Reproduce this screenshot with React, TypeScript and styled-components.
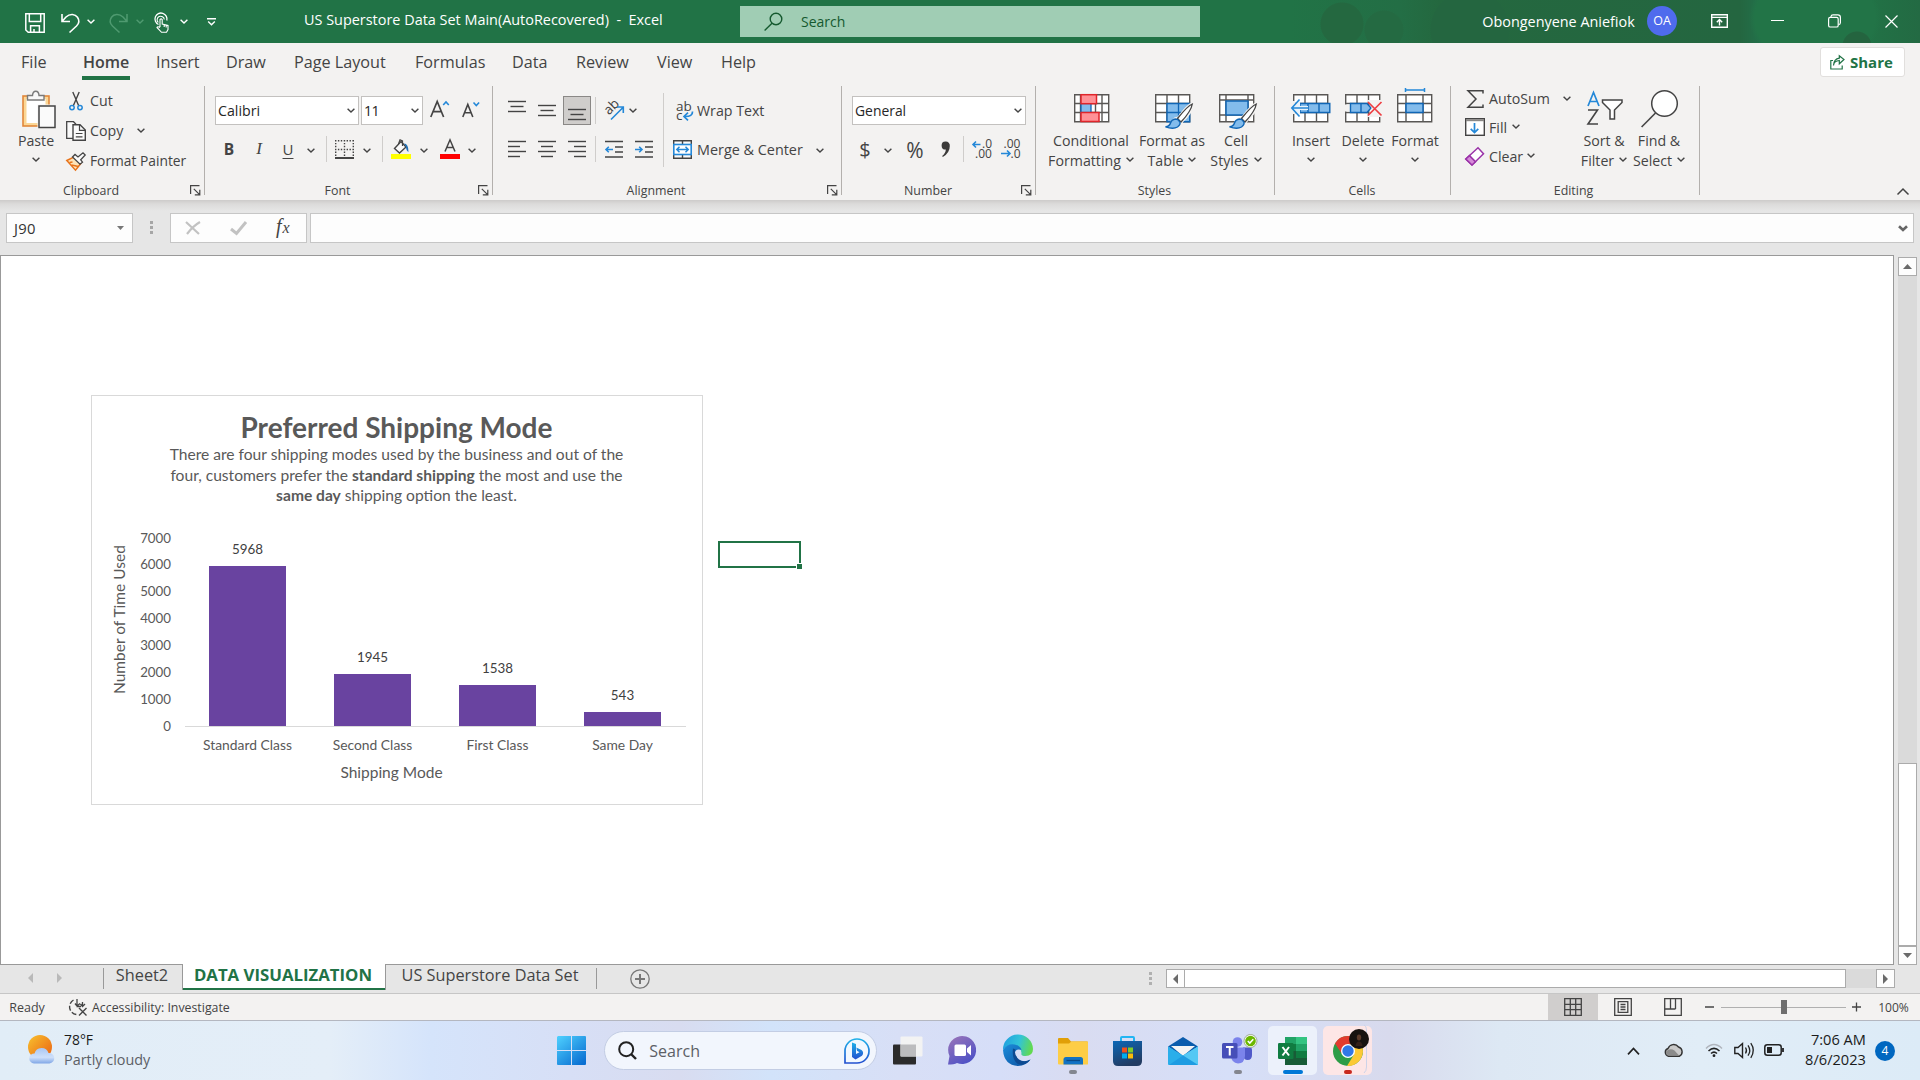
import React from "react";
import styled, { createGlobalStyle } from "styled-components";

const UI = `"Open Sans", "Noto Sans", sans-serif`;
const INK = "#444444";
const BLUE = "#2488d8";

const Global = createGlobalStyle`
  *, *::before, *::after { box-sizing: border-box; }
  html, body { margin: 0; padding: 0; overflow: hidden; background: #e6e6e6; }
  body { font-family: ${UI}; color: ${INK}; }
  svg { display: block; flex: none; overflow: visible; }
`;

const Screen = styled.div`
  width: 1920px;
  height: 1080px;
  display: flex;
  flex-direction: column;
  overflow: hidden;
`;

/* ---------- shared pieces ---------- */

const Line = styled.div<{ $h?: number; $pl?: number }>`
  display: flex;
  align-items: center;
  height: ${(p) => (p.$h ? `${p.$h}px` : "100%")};
  padding-left: ${(p) => p.$pl ?? 0}px;
`;

const Slot = styled.div<{ $w?: number; $l?: number; $mt?: number }>`
  flex: none;
  display: flex;
  align-items: center;
  justify-content: center;
  width: ${(p) => (p.$w ? `${p.$w}px` : "auto")};
  margin-left: ${(p) => p.$l ?? 0}px;
  margin-top: ${(p) => p.$mt ?? 0}px;
`;

const Text = styled.span<{ $s?: number; $w?: number; $c?: string; $l?: number; $ls?: number }>`
  font-size: ${(p) => p.$s ?? 14.2}px;
  font-weight: ${(p) => p.$w ?? 400};
  color: ${(p) => p.$c ?? "inherit"};
  margin-left: ${(p) => p.$l ?? 0}px;
  letter-spacing: ${(p) => p.$ls ?? 0}px;
  line-height: 20px;
  white-space: pre;
`;

function Ico({ w, h, children }: { w: number; h: number; children: React.ReactNode }) {
  return (
    <svg width={w} height={h} viewBox={`0 0 ${w} ${h}`} fill="none">
      {children}
    </svg>
  );
}

const Chevron = ({ c = INK, w = 8 }: { c?: string; w?: number }) => (
  <svg width={w} height={w * 0.625} viewBox="0 0 8 5" fill="none" stroke={c} strokeWidth={1.4}>
    <path d="M.6 .7 4 4.1 7.4 .7" />
  </svg>
);

/* ---------- title bar ---------- */

const TitleBar = styled.header`
  flex: none;
  height: 43px;
  display: flex;
  align-items: center;
  color: #fff;
  background:
    radial-gradient(circle at 1857px 46px, #24643f 0 14px, transparent 15px),
    radial-gradient(ellipse 66px 50px at 1815px 18px, #227447 0 60px, transparent 66px),
    radial-gradient(circle at 1342px 24px, #246840 0 21px, transparent 22px),
    radial-gradient(circle at 1384px 30px, #246a42 0 19px, transparent 20px),
    radial-gradient(circle at 1470px 30px, #246640 0 39px, transparent 40px),
    linear-gradient(90deg, #217346 1290px, #236e45 1400px, #24683f 1440px, #246640 1740px, #22704a 1760px, #217346 1860px, #236a43 1920px);
`;

const SearchBox = styled.div`
  flex: none;
  width: 460px;
  height: 31px;
  margin-left: 77px;
  display: flex;
  align-items: center;
  padding-left: 24px;
  background: #a0cdb4;
`;

const Avatar = styled.div`
  flex: none;
  width: 30px;
  height: 30px;
  margin-left: 12px;
  margin-top: -1px;
  border-radius: 50%;
  background: #4f6bed;
  display: flex;
  align-items: center;
  justify-content: center;
`;

const TitleText = styled.div`
  flex: none;
  width: 359px;
  margin: -5px 0 0 88px;
`;

function Title() {
  return (
    <TitleBar>
      <Slot $l={25} $mt={3}>
        <Ico w={20} h={20}>
          <g stroke="#fff" strokeWidth={1.5}>
            <path d="M.8 .8H19.2V19.2H3.2L.8 17z" />
            <path d="M4.3 1V8.6H15.7V1M5.6 19V12.8H14.4V19M9 19V16" />
          </g>
        </Ico>
      </Slot>
      <Slot $l={16} $mt={2}>
        <Ico w={19} h={20}>
          <path d="M1 1V8.5H9M1.4 8 5 4C9 .2 14.200 .9 16.500 4.200 18.500 7.200 18 10.500 15.500 13L8.500 19.500" stroke="#fff" strokeWidth={1.6} />
        </Ico>
      </Slot>
      <Slot $l={7}><Chevron c="#fff" /></Slot>
      <Slot $l={14} $mt={2}>
        <Ico w={19} h={20}>
          <path d="M18 1V8.500H10M17.600 8 14 4C10 .2 4.800 .9 2.500 4.200 .5 7.200 1 10.500 3.500 13L10.500 19.500" stroke="#4f9a70" strokeWidth={1.5} />
        </Ico>
      </Slot>
      <Slot $l={8}><Chevron c="#4f9a70" /></Slot>
      <Slot $l={10} $mt={3}>
        <Ico w={16} h={20}>
          <path d="M4.500 11.500A6 6 0 1 1 12.800 7.500" stroke="#fff" strokeWidth={1.300} />
          <path d="M4.300 9.500A3.600 3.600 0 1 1 10.300 6.500" stroke="#fff" strokeWidth={1.100} />
          <path d="M6 14V6.500Q7.200 5.300 8.200 6.500V11L14 12.500V16.500L12.500 19.300H7.500L3 14.500Q3.500 13 6 14.500M10.200 11.500V14M12.200 12V14.500" stroke="#fff" strokeWidth={1.100} />
        </Ico>
      </Slot>
      <Slot $l={10}><Chevron c="#fff" /></Slot>
      <Slot $l={19} $mt={1}>
        <Ico w={9} h={8}>
          <path d="M0 .8H9M1.200 3.500 4.500 6.800 7.800 3.500" stroke="#fff" strokeWidth={1.400} />
        </Ico>
      </Slot>
      <TitleText>
        <Text $s={14.43}>{"US Superstore Data Set Main(AutoRecovered)\u00a0 -\u00a0 Excel"}</Text>
      </TitleText>
      <SearchBox>
        <Ico w={19} h={19}>
          <g stroke="#15592f" strokeWidth={1.400}>
            <circle cx={12} cy={7} r={5.800} />
            <path d="M8 11.200 .6 18.500" />
          </g>
        </Ico>
        <Text $s={14} $c="#15592f" $l={18}>Search</Text>
      </SearchBox>
      <Slot $l={282} $w={153}><Text $s={14.4}>Obongenyene Aniefiok</Text></Slot>
      <Avatar><Text $s={12.500}>OA</Text></Avatar>
      <Slot $l={34} $mt={-1}>
        <Ico w={17} h={14}>
          <g stroke="#fff" strokeWidth={1.400}>
            <path d="M.7 .7H16.300V13.300H.7zM.7 3.400H16.300M8.500 11.500V5.500M5.800 8.200 8.500 5.500 11.200 8.200" />
          </g>
        </Ico>
      </Slot>
      <Slot $l={43} $mt={-1}><Ico w={13} h={2}><path d="M0 .5H13" stroke="#fff" /></Ico></Slot>
      <Slot $l={44} $mt={-1}>
        <Ico w={13} h={14}>
          <g stroke="#fff" strokeWidth={1.200}>
            <rect x={.6} y={3.400} width={9.600} height={9.600} rx={1.600} />
            <path d="M3 3.200V2.500Q3.200 .9 5 .9H9.800Q12.400 .9 12.400 3.500V8.800Q12.300 10.500 10.500 10.700" />
          </g>
        </Ico>
      </Slot>
      <Slot $l={44} $mt={-1}>
        <Ico w={13} h={13}><path d="M.5 .5 12.500 12.500M12.500 .5 .5 12.500" stroke="#fff" strokeWidth={1.200} /></Ico>
      </Slot>
    </TitleBar>
  );
}

/* ---------- ribbon tabs ---------- */

const TabBar = styled.nav`
  flex: none;
  height: 43px;
  display: flex;
  align-items: flex-start;
  padding-left: 21px;
  background: #f3f2f1;
`;

const TabItem = styled.div<{ $w: number }>`
  flex: none;
  width: ${(p) => p.$w}px;
  height: 36px;
  padding-top: 8px;
`;

const TabLabel = styled.div<{ $active?: boolean }>`
  display: inline-flex;
  height: 28px;
  padding: 0 1px;
  margin-left: ${(p) => (p.$active ? 0 : -1)}px;
  font-size: ${(p) => (p.$active ? 16 : 16.2)}px;
  line-height: 21px;
  white-space: nowrap;
  font-weight: ${(p) => (p.$active ? 600 : 400)};
  border-bottom: ${(p) => (p.$active ? "4px solid #217346" : "0")};
`;

const ShareButton = styled.div`
  width: 85px;
  height: 30px;
  margin: 4px 15px 0 auto;
  display: flex;
  align-items: center;
  padding-left: 9px;
  color: #217346;
  background: #fff;
  border: 1px solid #e1dfdd;
  border-radius: 3px;
`;

const TABS: [string, number][] = [
  ["File", 61], ["Home", 74], ["Insert", 70], ["Draw", 68], ["Page Layout", 121],
  ["Formulas", 97], ["Data", 64], ["Review", 81], ["View", 64], ["Help", 50],
];

function Tabs() {
  return (
    <TabBar>
      {TABS.map(([name, w]) => (
        <TabItem key={name} $w={w}>
          <TabLabel $active={name === "Home"}>{name}</TabLabel>
        </TabItem>
      ))}
      <ShareButton>
        <Ico w={15} h={15}>
          <g stroke="#217346" strokeWidth={1.200}>
            <path d="M3 5.500H.8V14H12.200V10.500" />
            <path d="M3.500 10.500Q4 5.800 9.300 5.500V8.800L14 4.500 9.300 .8V3.200Q3.800 4 3.500 10.500z" />
          </g>
        </Ico>
        <Text $s={15} $w={700} $l={5}>Share</Text>
      </ShareButton>
    </TabBar>
  );
}

/* ---------- ribbon ---------- */

const RibbonBar = styled.div`
  flex: none;
  height: 114px;
  display: flex;
  align-items: flex-start;
  background: #f3f2f1;
`;

const GroupBox = styled.section<{ $w: number }>`
  flex: none;
  width: ${(p) => p.$w}px;
  height: 109px;
  display: flex;
  flex-direction: column;
  border-right: 1px solid #b3b0ad;
`;

const GroupBody = styled.div`
  height: 94px;
  display: flex;
`;

const GroupFooter = styled.div`
  height: 15px;
  display: flex;
  align-items: center;
  justify-content: space-between;
  padding-right: 3px;
`;

const GroupName = styled.div<{ $shift: number }>`
  flex: 1;
  text-align: center;
  padding-left: ${(p) => Math.max(0, p.$shift)}px;
  padding-right: ${(p) => Math.max(0, -p.$shift)}px;
  margin-top: 6px;
  font-size: 12.400px;
  line-height: 15px;
`;

const Launcher = () => (
  <Slot $mt={5}>
    <Ico w={11} h={11}>
      <path d="M.6 9V.6H9.500M3.800 3.800 9.600 9.600M9.800 4.800V9.900H4.800" stroke={INK} strokeWidth={1.200} />
    </Ico>
  </Slot>
);

function Group({ w, name, shift = 0, launcher, children }: {
  w: number; name: string; shift?: number; launcher?: boolean; children: React.ReactNode;
}) {
  return (
    <GroupBox $w={w}>
      <GroupBody>{children}</GroupBody>
      <GroupFooter>
        <GroupName $shift={shift}>{name}</GroupName>
        {launcher && <Launcher />}
      </GroupFooter>
    </GroupBox>
  );
}

const Col = styled.div<{ $w?: number; $pt?: number; $pl?: number }>`
  flex: none;
  display: flex;
  flex-direction: column;
  width: ${(p) => (p.$w ? `${p.$w}px` : "auto")};
  padding-top: ${(p) => p.$pt ?? 0}px;
  padding-left: ${(p) => p.$pl ?? 0}px;
`;

const BigButtonBox = styled.div<{ $w: number; $l: number }>`
  flex: none;
  width: ${(p) => p.$w}px;
  margin-left: ${(p) => p.$l}px;
  display: flex;
  flex-direction: column;
  align-items: center;
`;

const BigIcon = styled.div`
  height: 45px;
  padding-top: 2px;
  display: flex;
  justify-content: center;
  align-items: flex-start;
`;

const BigLine = styled.div`
  height: 20px;
  display: flex;
  align-items: center;
  gap: 5px;
`;

function BigButton({ w, l, icon, lines }: { w: number; l: number; icon: React.ReactNode; lines: string[] }) {
  return (
    <BigButtonBox $w={w} $l={l}>
      <BigIcon>{icon}</BigIcon>
      <BigLine><Text>{lines[0]}</Text></BigLine>
      <BigLine>
        {lines[1] && <Text>{lines[1]}</Text>}
        <Slot $mt={-3}><Chevron /></Slot>
      </BigLine>
    </BigButtonBox>
  );
}

const Combo = styled.div<{ $w: number; $l: number }>`
  flex: none;
  width: ${(p) => p.$w}px;
  height: 29px;
  margin-left: ${(p) => p.$l}px;
  padding: 0 3px 0 2px;
  display: flex;
  align-items: center;
  justify-content: space-between;
  background: #fff;
  border: 1px solid #c3c1bf;
  color: #262626;
`;

const Rule = styled.div<{ $h: number; $l: number }>`
  flex: none;
  width: 1px;
  height: ${(p) => p.$h}px;
  margin-left: ${(p) => p.$l}px;
  background: #cfcdcb;
`;

const ActiveToggle = styled.div<{ $l: number }>`
  flex: none;
  width: 28px;
  height: 29px;
  margin-left: ${(p) => p.$l}px;
  display: flex;
  align-items: center;
  justify-content: center;
  background: #cfcdcb;
  border: 1px solid #8a8886;
`;

const Glyph = styled.span<{ $s: number; $w?: number; $i?: boolean; $u?: boolean; $serif?: boolean }>`
  font-size: ${(p) => p.$s}px;
  font-weight: ${(p) => p.$w ?? 400};
  font-style: ${(p) => (p.$i ? "italic" : "normal")};
  font-family: ${(p) => (p.$serif ? `"Liberation Serif", serif` : UI)};
  text-decoration: ${(p) => (p.$u ? "underline" : "none")};
  text-underline-offset: 3px;
  line-height: 20px;
`;

/* Horizontal strokes: [x1, x2, y] */
const Bars = ({ w, h, rows, c = INK }: { w: number; h: number; rows: [number, number, number][]; c?: string }) => (
  <Ico w={w} h={h}>
    {rows.map(([a, b, y]) => <path key={y} d={`M${a} ${y + 0.5}H${b}`} stroke={c} strokeWidth={1.400} />)}
  </Ico>
);

const PasteIcon = () => (
  <Ico w={34} h={38}>
    <rect x={1} y={6} width={26} height={30} fill="#fbd796" stroke="#e1873a" strokeWidth={1.600} />
    <rect x={4.500} y={9} width={19} height={24} fill="#fff" />
    <path d="M5.500 10V5.500H10.500Q10.800 1.200 13.800 1.200T17 5.500H22V10z" fill="#f8f8f8" stroke="#7a7a7a" strokeWidth={1.400} />
    <rect x={15.500} y={14.500} width={18} height={23} fill="#f3f2f1" />
    <rect x={17} y={16} width={16} height={21.500} fill="#fafafa" stroke="#444" strokeWidth={1.500} />
  </Ico>
);

const CutIcon = () => (
  <Ico w={14} h={20}>
    <path d="M3.800 1 9.800 15M10.200 1 4.200 15" stroke={INK} strokeWidth={1.400} />
    <circle cx={3} cy={16.600} r={2.200} stroke={BLUE} strokeWidth={1.500} />
    <circle cx={11} cy={16.600} r={2.200} stroke={BLUE} strokeWidth={1.500} />
  </Ico>
);

const CopyIcon = () => (
  <Ico w={20} h={20}>
    <path d="M7 17.300H.7V.7H7.500L10 3.200" stroke={INK} strokeWidth={1.300} fill="#fafafa" />
    <path d="M7 3.700H14L19.300 9V19.300H7z" stroke={INK} strokeWidth={1.400} fill="#fafafa" />
    <path d="M13.500 4V9.300H19M9.800 12.500H16.500M9.800 15.800H16.500" stroke={INK} strokeWidth={1.200} />
  </Ico>
);

const PainterIcon = () => (
  <Ico w={20} h={19}>
    <path d="M.8 8.500 8.300 4.800 14.800 11.500 9.500 18.200z" fill="#fde3b8" stroke="#e8731a" strokeWidth={1.500} />
    <path d="M3.500 10.500 6.500 10M5.500 13 12.500 14.500" stroke="#e8731a" strokeWidth={1.400} />
    <path d="M6.500 5 9 2.500 12 5 17 .8 19.200 3 14.700 7.800 16.500 10.200 14 12.200z" fill="#fafafa" stroke={INK} strokeWidth={1.300} />
  </Ico>
);

function ClipboardGroup() {
  return (
    <Group w={205} name="Clipboard" shift={-8} launcher>
      <BigButton w={52} l={10} icon={<Slot $mt={2} $l={6}><PasteIcon /></Slot>} lines={["Paste"]} />
      <Col $pl={4}>
        <Line $h={30}><Slot $w={20}><CutIcon /></Slot><Text $l={4}>Cut</Text></Line>
        <Line $h={30}><Slot $w={20}><CopyIcon /></Slot><Text $l={4}>Copy</Text><Slot $l={14} $mt={-1}><Chevron /></Slot></Line>
        <Line $h={30}><Slot $w={20}><PainterIcon /></Slot><Text $l={4} $s={13.800}>Format Painter</Text></Line>
      </Col>
    </Group>
  );
}

const GrowIcon = () => (
  <Ico w={20} h={18}>
    <path d="M.8 17 7.200 1.500 13.600 17M3 11.700H11.400" stroke={INK} strokeWidth={1.700} />
    <path d="M13.200 5 16 2 18.800 5" stroke={BLUE} strokeWidth={1.600} />
  </Ico>
);
const ShrinkIcon = () => (
  <Ico w={18} h={17}>
    <path d="M.8 16 5.800 3.500 10.800 16M2.600 11.700H9" stroke={INK} strokeWidth={1.600} />
    <path d="M11.500 1.500 14.300 4.500 17.100 1.500" stroke={BLUE} strokeWidth={1.600} />
  </Ico>
);
const BorderIcon = () => (
  <Ico w={19} h={19}>
    <path d="M0 .7H19M0 9.500H19M.7 0V17M9.500 0V17M18.300 0V17" stroke={INK} strokeWidth={1.400} strokeDasharray="1.400 1.500" />
    <path d="M0 18H19" stroke={INK} strokeWidth={2} />
  </Ico>
);
const BucketIcon = () => (
  <Ico w={20} h={20}>
    <path d="M3.500 9.500 10 2.500 15 8 8.500 14z" fill="#fafafa" stroke={INK} strokeWidth={1.400} />
    <path d="M7.500 5 9 .8 11.500 2V7" stroke={INK} strokeWidth={1.200} />
    <path d="M13 4.500Q17.500 4.500 17.500 13 15.300 12 15 8z" fill="#1f6fb5" />
    <rect y={15} width={20} height={5} fill="#ffff00" />
  </Ico>
);
const FontColorIcon = () => (
  <Ico w={20} h={20}>
    <path d="M5 12.500 10 .8 15 12.500M6.800 8.500H13.200" stroke={INK} strokeWidth={1.500} />
    <rect y={15} width={20} height={5} fill="#ff0000" />
  </Ico>
);

function FontGroup() {
  return (
    <Group w={288} name="Font" shift={-8} launcher>
      <Col $pt={10}>
        <Line $h={29}>
          <Combo $w={144} $l={10}><Text>Calibri</Text><Chevron /></Combo>
          <Combo $w={62} $l={2}><Text $ls={-0.500}>11</Text><Chevron /></Combo>
          <Slot $l={7} $mt={-4}><GrowIcon /></Slot>
          <Slot $l={12} $mt={-3}><ShrinkIcon /></Slot>
        </Line>
        <Line $h={48}>
          <Slot $l={16} $w={16}><Glyph $s={15.500} $w={700}>B</Glyph></Slot>
          <Slot $l={14} $w={16}><Glyph $s={17} $i $serif>I</Glyph></Slot>
          <Slot $l={13} $w={16} $mt={-1}><Glyph $s={15} $u>U</Glyph></Slot>
          <Slot $l={11} $mt={3}><Chevron /></Slot>
          <Rule $h={26} $l={11} />
          <Slot $l={8}><BorderIcon /></Slot>
          <Slot $l={9} $mt={3}><Chevron /></Slot>
          <Rule $h={26} $l={11} />
          <Slot $l={8}><BucketIcon /></Slot>
          <Slot $l={9} $mt={3}><Chevron /></Slot>
          <Slot $l={12}><FontColorIcon /></Slot>
          <Slot $l={8} $mt={3}><Chevron /></Slot>
        </Line>
      </Col>
    </Group>
  );
}

const OrientIcon = () => (
  <Ico w={21} h={20}>
    <text x={0} y={0} transform="translate(5 14.500) rotate(-45)" fontFamily="Open Sans" fontSize={13.500} fill={INK}>ab</text>
    <path d="M7 18.500 19 6.500M13 6H19.300V12" stroke={BLUE} strokeWidth={1.600} />
  </Ico>
);
const WrapIcon = () => (
  <Ico w={18} h={20}>
    <text fontFamily="Open Sans" fontSize={13.500} fill={INK}>
      <tspan x={0} y={10}>ab</tspan>
      <tspan x={0} y={19}>c</tspan>
    </text>
    <path d="M16.500 10.500Q17 15.800 8.500 15.500M12 11.700 8 15.500 12 19.300" stroke={BLUE} strokeWidth={1.700} />
  </Ico>
);
const MergeIcon = () => (
  <Ico w={19} h={19}>
    <path d="M.7 .7H18.300V18.300H.7zM9.500 .7V5M9.500 14V18.300" stroke={INK} strokeWidth={1.400} fill="#fafafa" />
    <rect x={.8} y={4.500} width={17.400} height={10} fill="#fff" stroke={BLUE} strokeWidth={1.600} />
    <path d="M4 9.500H15M6.500 6.800 3.800 9.500 6.500 12.200M12.500 6.800 15.200 9.500 12.500 12.200" stroke={BLUE} strokeWidth={1.500} />
  </Ico>
);
const IndentIcon = ({ dir }: { dir: "in" | "out" }) => (
  <Ico w={18} h={18}>
    <path d="M0 1.500H18M10 7H18M10 12H18M0 17H18" stroke={INK} strokeWidth={1.400} />
    {dir === "out"
      ? <path d="M8 9.500H1M3.800 6.700 1 9.500 3.800 12.300" stroke={BLUE} strokeWidth={1.600} />
      : <path d="M0 9.500H7M4.200 6.700 7 9.500 4.200 12.300" stroke={BLUE} strokeWidth={1.600} />}
  </Ico>
);

const AlignStack = styled.div`
  display: flex;
`;

function AlignmentGroup() {
  return (
    <Group w={349} name="Alignment" shift={-8} launcher>
      <AlignStack>
        <Col $pt={10} $w={170}>
          <Line $h={29}>
            <Slot $l={15}><Bars w={18} h={20} rows={[[0, 18, 0], [2.500, 15.500, 5], [0, 18, 10]]} /></Slot>
            <Slot $l={12}><Bars w={18} h={20} rows={[[0, 18, 4], [2.500, 15.500, 9], [0, 18, 14]]} /></Slot>
            <ActiveToggle $l={7}><Bars w={18} h={20} rows={[[0, 18, 8], [2.500, 15.500, 13], [0, 18, 18]]} /></ActiveToggle>
            <Rule $h={27} $l={4} />
            <Slot $l={8}><OrientIcon /></Slot>
            <Slot $l={4}><Chevron /></Slot>
          </Line>
          <Line $h={48}>
            <Slot $l={15}><Bars w={18} h={18} rows={[[0, 18, 1], [0, 12, 6], [0, 18, 11], [0, 12, 16]]} /></Slot>
            <Slot $l={12}><Bars w={18} h={18} rows={[[0, 18, 1], [3, 15, 6], [0, 18, 11], [3, 15, 16]]} /></Slot>
            <Slot $l={12}><Bars w={18} h={18} rows={[[0, 18, 1], [6, 18, 6], [0, 18, 11], [6, 18, 16]]} /></Slot>
            <Rule $h={26} $l={9} />
            <Slot $l={9}><IndentIcon dir="out" /></Slot>
            <Slot $l={12}><IndentIcon dir="in" /></Slot>
          </Line>
        </Col>
        <Col $pt={7}><Rule $h={74} $l={0} /></Col>
        <Col $pt={10} $pl={9}>
          <Line $h={29}><Slot $w={19} $l={2}><WrapIcon /></Slot><Text $l={3}>Wrap Text</Text></Line>
          <Line $h={48}><Slot $w={19}><MergeIcon /></Slot><Slot $l={5} $mt={2}><Text $s={14.400}>Merge &amp; Center</Text></Slot><Slot $l={13} $mt={3}><Chevron /></Slot></Line>
        </Col>
      </AlignStack>
    </Group>
  );
}

const DecimalIcon = ({ dir }: { dir: "in" | "out" }) => (
  <Ico w={20} h={20}>
    {dir === "in" ? (
      <>
        <text fontFamily="Open Sans" fontSize={12} fill={INK}>
          <tspan x={10} y={9}>.0</tspan>
          <tspan x={3} y={19}>.00</tspan>
        </text>
        <path d="M8.500 5.500H1M4 2.500 1 5.500 4 8.500" stroke={BLUE} strokeWidth={1.600} />
      </>
    ) : (
      <>
        <text fontFamily="Open Sans" fontSize={12} fill={INK}>
          <tspan x={2.500} y={9}>.00</tspan>
          <tspan x={9.500} y={19}>.0</tspan>
        </text>
        <path d="M0 14.500H8.500M6 11.500 9 14.500 6 17.500" stroke={BLUE} strokeWidth={1.600} />
      </>
    )}
  </Ico>
);

function NumberGroup() {
  return (
    <Group w={194} name="Number" shift={-7} launcher>
      <Col $pt={10}>
        <Line $h={29}><Combo $w={174} $l={10}><Text $s={13.900}>General</Text><Chevron /></Combo></Line>
        <Line $h={48}>
          <Slot $l={16} $w={14} $mt={1}><Glyph $s={20}>$</Glyph></Slot>
          <Slot $l={12} $mt={3}><Chevron /></Slot>
          <Slot $l={13} $w={20} $mt={1}><Glyph $s={21}>%</Glyph></Slot>
          <Slot $l={16}>
            <Ico w={10} h={17}>
              <path d="M4.500 .5A4 4 0 0 1 8.800 5Q8.800 12 1.800 16L1.200 15Q4.800 12 4.800 8.600A4 4 0 0 1 4.500 .5z" fill="#3b3a39" />
            </Ico>
          </Slot>
          <Rule $h={26} $l={12} />
          <Slot $l={8}><DecimalIcon dir="in" /></Slot>
          <Slot $l={9}><DecimalIcon dir="out" /></Slot>
        </Line>
      </Col>
    </Group>
  );
}

const Sheet = ({ w = 34, xs, ys = [9, 18] }: { w?: number; xs: number[]; ys?: number[] }) => (
  <>
    <rect x={.700} y={.700} width={w} height={27} fill="#fff" />
    <path
      d={`M.7 .7H${w + 0.7}V27.700H.7z` + xs.map((x) => `M${x} .7V27.700`).join("") + ys.map((y) => `M.7 ${y + 0.5}H${w + 0.7}`).join("")}
      stroke="#595755"
      strokeWidth={1.400}
    />
  </>
);

const Brush = () => (
  <g>
    <path d="M38 9.500Q33 11 23.500 24L20 25Q17 27 15.500 31.500L10 33.500Q19 36.500 24.500 32L27 27Q36.500 19 38 9.500z" fill="#f3f2f1" stroke="#f3f2f1" strokeWidth={3} />
    <path d="M37.300 10Q33 11.500 22.500 24.500L26 28Q36 17.500 37.300 10z" fill="#fff" stroke={INK} strokeWidth={1.300} />
    <path d="M20.500 25Q16.500 25.500 15.500 29 14.500 32.500 10.500 32.800 18 35.500 22.500 33 26 30.500 24.800 27.800 23 25 20.500 25z" fill="#83bcec" stroke="#1066b5" strokeWidth={1.400} />
  </g>
);

const CondIcon = () => (
  <Ico w={36} h={29}>
    <Sheet xs={[6.500, 28, 21.500]} />
    <rect x={7} y={9.500} width={10} height={9} fill="#83bcec" stroke="#1066b5" strokeWidth={1.300} />
    <rect x={7} y={.7} width={15.500} height={9} fill="#ff9196" stroke="#e0262b" strokeWidth={1.500} />
    <rect x={7} y={18.500} width={18} height={9} fill="#ff9196" stroke="#e0262b" strokeWidth={1.500} />
  </Ico>
);
const FormatTableIcon = () => (
  <Ico w={38} h={35}>
    <Sheet xs={[12, 23.500]} />
    <path d="M12 9.500H34.700V27.700H12z" fill="#83bcec" stroke="#1066b5" strokeWidth={1.400} />
    <path d="M23.500 9.500V27.700M12 18.500H34.700" stroke="#1066b5" strokeWidth={1.300} />
    <Brush />
  </Ico>
);
const CellStylesIcon = () => (
  <Ico w={38} h={35}>
    <Sheet xs={[7, 29]} ys={[5.500, 20.500]} />
    <rect x={7} y={7} width={22} height={14} fill="#83bcec" stroke="#1066b5" strokeWidth={1.500} />
    <Brush />
  </Ico>
);

function StylesGroup() {
  return (
    <Group w={239} name="Styles" shift={2}>
      <BigButton w={90} l={10} icon={<Slot $mt={6} $l={2}><CondIcon /></Slot>} lines={["Conditional", "Formatting"]} />
      <BigButton w={70} l={1} icon={<Slot $mt={6} $l={4}><FormatTableIcon /></Slot>} lines={["Format as", "Table"]} />
      <BigButton w={56} l={1} icon={<Slot $mt={6} $l={3}><CellStylesIcon /></Slot>} lines={["Cell", "Styles"]} />
    </Group>
  );
}

const InsertIcon = () => (
  <Ico w={40} h={29}>
    <g transform="translate(2 0)"><Sheet xs={[12, 23.500]} /></g>
    <path d="M0 7H4V20H0z" fill="#f3f2f1" />
    <path d="M9 9.500H38.800V18.500H9z" fill="#83bcec" stroke="#1066b5" strokeWidth={1.400} />
    <path d="M17 9.500V18.500M28 9.500V18.500" stroke="#1066b5" strokeWidth={1.400} />
    <path d="M9 5 .8 14 9 23V16H17V12H9z" fill="#e9f3fb" />
    <path d="M.8 14H17M8.500 5.500 .8 14 8.500 22.500" stroke={BLUE} strokeWidth={1.600} />
  </Ico>
);
const DeleteIcon = () => (
  <Ico w={38} h={29}>
    <Sheet xs={[12, 23.500]} />
    <path d="M0 10.500H5.500V17.500H0z" fill="#f3f2f1" />
    <path d="M5.500 9.500H22L26 14 22 18.500H5.500z" fill="#83bcec" stroke="#1066b5" strokeWidth={1.400} />
    <path d="M16 9.500V18.500" stroke="#1066b5" strokeWidth={1.400} />
    <path d="M22 6H38V23H22L27 14z" fill="#f3f2f1" />
    <path d="M23 8 36.500 21.500M36.500 8 23 21.500" stroke="#ee3e42" strokeWidth={1.700} />
  </Ico>
);
const FormatIcon = () => (
  <Ico w={36} h={35}>
    <g transform="translate(0 6)">
      <Sheet xs={[9, 26]} />
      <rect x={9} y={9.500} width={17} height={9} fill="#83bcec" stroke="#1066b5" strokeWidth={1.500} />
    </g>
    <path d="M8.500 0V4M27.500 0V4M8.500 2H27.500" stroke={BLUE} strokeWidth={1.500} />
  </Ico>
);

function CellsGroup() {
  return (
    <Group w={176} name="Cells" shift={2}>
      <BigButton w={52} l={10} icon={<Slot $mt={6}><InsertIcon /></Slot>} lines={["Insert"]} />
      <BigButton w={52} l={0} icon={<Slot $mt={6} $l={2}><DeleteIcon /></Slot>} lines={["Delete"]} />
      <BigButton w={52} l={0} icon={<FormatIcon />} lines={["Format"]} />
    </Group>
  );
}

const SigmaIcon = () => (
  <Ico w={17} h={18}>
    <path d="M16 3.500V.8H1L9 9 1 17.200H16V14.500" stroke={INK} strokeWidth={1.500} />
  </Ico>
);
const FillIcon = () => (
  <Ico w={20} h={18}>
    <rect x={.7} y={.7} width={18.600} height={16.600} fill="#fff" stroke={INK} strokeWidth={1.400} />
    <path d="M1 2.200H19" stroke="#8a8886" strokeWidth={2} />
    <path d="M9.500 5V14.500M5.700 10.800 9.500 14.500 13.300 10.800" stroke={BLUE} strokeWidth={1.700} />
  </Ico>
);
const ClearIcon = () => (
  <Ico w={20} h={19}>
    <path d="M.8 12 13 .8 18.500 6.800 7 18z" fill="#fff" stroke="#9a32a8" strokeWidth={1.500} />
    <path d="M.8 12 4.500 8.600 10.500 14.700 7 18z" fill="#d68ad9" stroke="#9a32a8" strokeWidth={1.500} />
  </Ico>
);
const SortIcon = () => (
  <Ico w={36} h={35}>
    <path d="M1 15 6.500 1.500 12 15M2.800 10.500H10.200" stroke={BLUE} strokeWidth={1.700} />
    <path d="M1 19H10.500L1 33H11" stroke={INK} strokeWidth={1.600} />
    <path d="M15.500 9H35V11.500L27.500 19V28H23V19L15.500 11.500z" fill="#fff" stroke={INK} strokeWidth={1.500} />
  </Ico>
);
const FindIcon = () => (
  <Ico w={37} h={38}>
    <circle cx={23.500} cy={13.500} r={12.800} fill="#fff" stroke={INK} strokeWidth={1.500} />
    <path d="M14.500 23 .6 37" stroke={INK} strokeWidth={1.600} />
  </Ico>
);

function EditingGroup() {
  return (
    <Group w={249} name="Editing">
      <Col $w={126} $pl={14}>
        <Line $h={26}><Slot $w={20}><SigmaIcon /></Slot><Text $l={4}>AutoSum</Text><Slot $l={13} $mt={-1}><Chevron /></Slot></Line>
        <Line $h={32}><Slot $w={20} $mt={-2}><FillIcon /></Slot><Text $l={4}>Fill</Text><Slot $l={5} $mt={-3}><Chevron /></Slot></Line>
        <Line $h={26}><Slot $w={20} $mt={-2}><ClearIcon /></Slot><Text $l={4}>Clear</Text><Slot $l={4} $mt={-3}><Chevron /></Slot></Line>
      </Col>
      <BigButton w={54} l={0} icon={<Slot $mt={3} $l={2}><SortIcon /></Slot>} lines={["Sort &", "Filter"]} />
      <BigButton w={56} l={0} icon={<Slot $mt={2}><FindIcon /></Slot>} lines={["Find &", "Select"]} />
    </Group>
  );
}

const CollapseSlot = styled.div`
  margin: 102px 11px 0 auto;
`;

function Ribbon() {
  return (
    <RibbonBar>
      <ClipboardGroup />
      <FontGroup />
      <AlignmentGroup />
      <NumberGroup />
      <StylesGroup />
      <CellsGroup />
      <EditingGroup />
      <CollapseSlot>
        <Ico w={12} h={7}><path d="M.5 6.500 6 1 11.500 6.500" stroke={INK} strokeWidth={1.500} /></Ico>
      </CollapseSlot>
    </RibbonBar>
  );
}

/* ---------- formula bar ---------- */

const FormulaBar = styled.div`
  flex: none;
  height: 55px;
  display: flex;
  align-items: flex-start;
  padding: 13px 6px 0;
  background: linear-gradient(180deg, #cdcbca 0, #dcdbda 4px, #e6e6e6 11px);
`;

const Field = styled.div<{ $w?: number; $l?: number }>`
  flex: ${(p) => (p.$w ? "none" : 1)};
  width: ${(p) => (p.$w ? `${p.$w}px` : "auto")};
  height: 30px;
  margin-left: ${(p) => p.$l ?? 0}px;
  display: flex;
  align-items: center;
  background: #fdfdfd;
  border: 1px solid #c6c6c6;
`;

const Push = styled.div`flex: 1;`;

const Dots = ({ c = "#a6a6a6" }: { c?: string }) => (
  <Ico w={3} h={13}>
    <path d="M0 0H3V3H0zM0 5H3V8H0zM0 10H3V13H0z" fill={c} />
  </Ico>
);

const DotsBox = styled.div`
  width: 3px;
  margin: 8px 0 0 17px;
`;

function Formula() {
  return (
    <FormulaBar>
      <Field $w={127}>
        <Text $s={14.800} $l={7} $ls={0.300} $c="#333">J90</Text>
        <Push />
        <Ico w={7} h={4}><path d="M0 0H7L3.500 4z" fill="#777" /></Ico>
        <Slot $w={8} />
      </Field>
      <DotsBox><Dots /></DotsBox>
      <Field $w={137} $l={17}>
        <Slot $l={14}>
          <Ico w={16} h={14}><path d="M1 1 14 13M15 1Q8 5 2 13" stroke="#c2c2c2" strokeWidth={2.200} /></Ico>
        </Slot>
        <Slot $l={29}>
          <Ico w={17} h={14}><path d="M1 8 6.500 12.500 16 1" stroke="#c2c2c2" strokeWidth={3} /></Ico>
        </Slot>
        <Slot $l={29} $mt={-4}><Glyph $s={20} $i $serif>f</Glyph></Slot>
        <Slot $l={1}><Glyph $s={16} $i $serif>x</Glyph></Slot>
      </Field>
      <Field $l={3}>
        <Push />
        <Ico w={10} h={7}><path d="M1 1.200 5 5 9 1.200" stroke="#666" strokeWidth={2.600} /></Ico>
        <Slot $w={5} />
      </Field>
    </FormulaBar>
  );
}

/* ---------- worksheet ---------- */

const Work = styled.div`
  flex: none;
  height: 710px;
  display: flex;
  background: #e6e6e6;
`;

const Canvas = styled.main`
  flex: none;
  width: 1894px;
  height: 710px;
  display: flex;
  align-items: flex-start;
  background: #fff;
  border: 1px solid #999;
`;

const VScroll = styled.div`
  flex: none;
  width: 19px;
  height: 708px;
  margin: 2px 0 0 4px;
  display: flex;
  flex-direction: column;
  background: #dadada;
`;

const ScrollButton = styled.div`
  flex: none;
  width: 19px;
  height: 19px;
  display: flex;
  align-items: center;
  justify-content: center;
  background: #fdfdfd;
  border: 1px solid #ababab;
`;

const VThumb = styled.div`
  flex: none;
  height: 183px;
  margin: auto 0 0;
  background: #fff;
  border: 1px solid #ababab;
`;

const Arrow = ({ d, c = "#6a6a6a" }: { d: "up" | "down" | "left" | "right"; c?: string }) => {
  const paths = { up: "M0 5 4.500 0 9 5z", down: "M0 0H9L4.500 5z", left: "M5 0V10L0 5z", right: "M0 0V10L5 5z" };
  const vert = d === "up" || d === "down";
  return <Ico w={vert ? 9 : 5} h={vert ? 5 : 10}><path d={paths[d]} fill={c} /></Ico>;
};

const ChartCard = styled.figure`
  flex: none;
  width: 612px;
  height: 410px;
  margin: 139px 0 0 90px;
  display: flex;
  flex-direction: column;
  align-items: center;
  font-family: Lato, "Open Sans", sans-serif;
  color: #595959;
  background: #fff;
  border: 1px solid #d9d9d9;
`;

const ChartTitle = styled.h1`
  margin: 14px 1px 0 0;
  font-size: 28px;
  font-weight: 700;
  line-height: 34px;
  white-space: nowrap;
`;

const ChartNote = styled.p`
  margin: 0 1px 0 0;
  text-align: center;
  font-size: 15.600px;
  line-height: 20.500px;
  white-space: pre;
`;

const PlotRow = styled.div`
  width: 610px;
  height: 202px;
  margin-top: 19px;
  display: flex;
`;

const YTitle = styled.div`
  width: 20px;
  height: 188px;
  margin: 1px 0 0 17px;
  display: flex;
  align-items: center;
  justify-content: center;
  writing-mode: vertical-rl;
  transform: rotate(180deg);
  font-size: 15.500px;
  line-height: 20px;
  white-space: nowrap;
`;

const YAxis = styled.div`
  width: 42px;
  display: flex;
  flex-direction: column;
  text-align: right;
  font-size: 13.300px;
  line-height: 26.860px;
`;

const Plot = styled.div`
  width: 501px;
  height: 202px;
  margin-left: 14px;
  display: flex;
  border-bottom: 1px solid #d9d9d9;
`;

const Category = styled.div`
  width: 125px;
  height: 201px;
  flex: none;
  display: flex;
  flex-direction: column;
  align-items: center;
  justify-content: flex-end;
  color: #404040;
  font-size: 13.400px;
  line-height: 20px;
`;

const BarFill = styled.div`
  flex: none;
  width: 77px;
  margin-top: 7px;
  background: #6943a0;
`;

const XLabels = styled.div`
  width: 500px;
  margin: 8px 0 0 76px;
  display: flex;
  font-size: 13.850px;
  line-height: 20px;
`;

const XLabel = styled.div`
  width: 125px;
  text-align: center;
`;

const XTitle = styled.div`
  margin: 7px 11px 0 0;
  font-size: 15.500px;
  line-height: 20px;
`;

const Selection = styled.div`
  flex: none;
  width: 83px;
  height: 27px;
  margin: 285px 0 0 15px;
  display: flex;
  align-items: flex-end;
  justify-content: flex-end;
  border: 2px solid #217346;
`;

const FillHandle = styled.i`
  width: 6px;
  height: 6px;
  margin: 0 -3px -3px 0;
  background: #217346;
  border: solid #fff;
  border-width: 1px 0 0 1px;
`;

const DATA: [string, number][] = [
  ["Standard Class", 5968], ["Second Class", 1945], ["First Class", 1538], ["Same Day", 543],
];
const TICKS = [7000, 6000, 5000, 4000, 3000, 2000, 1000, 0];

function Chart() {
  return (
    <ChartCard>
      <ChartTitle>Preferred Shipping Mode</ChartTitle>
      <ChartNote>
        There are four shipping modes used by the business and out of the{"\n"}
        four, customers prefer the <b>standard shipping</b> the most and use the{"\n"}
        <b>same day</b> shipping option the least.
      </ChartNote>
      <PlotRow>
        <YTitle>Number of Time Used</YTitle>
        <YAxis>{TICKS.map((t) => <span key={t}>{t}</span>)}</YAxis>
        <Plot>
          {DATA.map(([name, v]) => (
            <Category key={name}>
              {v}
              <BarFill style={{ height: Math.floor((v / 7000) * 188) }} />
            </Category>
          ))}
        </Plot>
      </PlotRow>
      <XLabels>{DATA.map(([name]) => <XLabel key={name}>{name}</XLabel>)}</XLabels>
      <XTitle>Shipping Mode</XTitle>
    </ChartCard>
  );
}

function Worksheet() {
  return (
    <Work>
      <Canvas>
        <Chart />
        <Selection><FillHandle /></Selection>
      </Canvas>
      <VScroll>
        <ScrollButton><Arrow d="up" /></ScrollButton>
        <VThumb />
        <ScrollButton><Arrow d="down" /></ScrollButton>
      </VScroll>
    </Work>
  );
}

/* ---------- sheet tabs ---------- */

const SheetBar = styled.div`
  flex: none;
  height: 29px;
  display: flex;
  align-items: flex-start;
  background: #e6e6e6;
  border-bottom: 1px solid #c6c6c6;
`;

const SheetTab = styled.div<{ $w: number; $active?: boolean }>`
  flex: none;
  width: ${(p) => p.$w}px;
  height: ${(p) => (p.$active ? 26 : 22)}px;
  margin-top: -1px;
  padding-bottom: ${(p) => (p.$active ? 4 : 0)}px;
  padding-right: 2px;
  display: flex;
  align-items: center;
  justify-content: center;
  font-size: ${(p) => (p.$active ? 16.800 : 16.300)}px;
  font-weight: ${(p) => (p.$active ? 700 : 400)};
  color: ${(p) => (p.$active ? "#217346" : INK)};
  background: ${(p) => (p.$active ? "#fff" : "transparent")};
  border: solid #999;
  border-width: ${(p) => (p.$active ? "0 1px" : "0")};
  box-shadow: ${(p) => (p.$active ? "inset 0 -2px 0 #217346" : "none")};
  line-height: 20px;
  white-space: nowrap;
`;

const TabRule = styled.div<{ $l: number }>`
  flex: none;
  width: 1px;
  height: 21px;
  margin: 3px 0 0 ${(p) => p.$l}px;
  background: #999;
`;

const SheetSlot = styled.div<{ $l: number; $t: number }>`
  flex: none;
  margin: ${(p) => p.$t}px 0 0 ${(p) => p.$l}px;
`;

const HScroll = styled.div`
  flex: none;
  width: 729px;
  height: 19px;
  margin: 4px 0 0 14px;
  display: flex;
  background: #dadada;
`;

const HThumb = styled.div`
  width: 662px;
  margin: 0 auto 0 -1px;
  background: #fff;
  border: 1px solid #ababab;
`;

function Sheets() {
  return (
    <SheetBar>
      <SheetSlot $l={28} $t={8}><Arrow d="left" c="#b9b9b9" /></SheetSlot>
      <SheetSlot $l={24} $t={8}><Arrow d="right" c="#b9b9b9" /></SheetSlot>
      <TabRule $l={41} />
      <SheetTab $w={78}>Sheet2</SheetTab>
      <SheetTab $w={204} $active>DATA VISUALIZATION</SheetTab>
      <SheetTab $w={210}>US Superstore Data Set</SheetTab>
      <TabRule $l={0} />
      <SheetSlot $l={33} $t={4}>
        <Ico w={20} h={20}>
          <circle cx={10} cy={10} r={9.200} stroke="#777" strokeWidth={1.300} />
          <path d="M10 5V15M5 10H15" stroke="#777" strokeWidth={2} />
        </Ico>
      </SheetSlot>
      <SheetSlot $l={499} $t={7}><Dots c="#b0b0b0" /></SheetSlot>
      <HScroll>
        <ScrollButton><Arrow d="left" /></ScrollButton>
        <HThumb />
        <ScrollButton><Arrow d="right" /></ScrollButton>
      </HScroll>
    </SheetBar>
  );
}

/* ---------- status bar ---------- */

const StatusBar = styled.div`
  flex: none;
  height: 27px;
  display: flex;
  align-items: center;
  padding-left: 9px;
  background: #f3f2f1;
  border-bottom: 1px solid #b4b7c0;
`;

const ViewButton = styled.div<{ $active?: boolean }>`
  flex: none;
  width: 50px;
  height: 26px;
  display: flex;
  align-items: center;
  justify-content: center;
  background: ${(p) => (p.$active ? "#d0cecd" : "transparent")};
`;

const ZoomTrack = styled.div`
  width: 125px;
  height: 14px;
  margin-left: 7px;
  display: flex;
  align-items: center;
  background: linear-gradient(#b0b0b0, #b0b0b0) 0 7px / 100% 1px no-repeat;
`;

const ZoomThumb = styled.div`
  width: 6px;
  height: 14px;
  margin-left: 60px;
  background: #6e6e6e;
`;

function Status() {
  return (
    <StatusBar>
      <Slot $w={36} $mt={1}><Text $s={12.500}>Ready</Text></Slot>
      <Slot $l={23}>
        <Ico w={20} h={18}>
          <path d="M5.500 2A7.800 7.800 0 0 0 8.500 16.500" stroke={INK} strokeWidth={1.400} strokeDasharray="5 2" />
          <path d="M9 1V8M7 5.500 9 8 12 5.500M8.500 8.500 13 8.500M14.500 4V8.500M12.500 6 14.500 8.500 17 6" stroke={INK} strokeWidth={1.300} />
          <path d="M11 10 18.500 17.500M18.500 10 11 17.500" stroke={INK} strokeWidth={1.400} />
        </Ico>
      </Slot>
      <Slot $l={4} $mt={1}><Text $s={12.350}>Accessibility: Investigate</Text></Slot>
      <Push />
      <ViewButton $active>
        <Ico w={18} h={18}><path d="M.7 .7H17.300V17.300H.7zM6.300 .7V17.300M11.700 .7V17.300M.7 6.300H17.300M.7 11.700H17.300" stroke={INK} strokeWidth={1.300} /></Ico>
      </ViewButton>
      <ViewButton>
        <Ico w={18} h={18}><path d="M.7 .7H17.300V17.300H.7zM4.200 3.700H13.800V14.300H4.200zM6.500 6.500H11.500M6.500 9H11.500M6.500 11.500H11.500" stroke={INK} strokeWidth={1.300} /></Ico>
      </ViewButton>
      <ViewButton>
        <Ico w={18} h={18}><path d="M.7 .7H17.300V17.300H.7zM.7 11H11.500M11.500 .7V11M6.500 .7V11" stroke={INK} strokeWidth={1.300} /></Ico>
      </ViewButton>
      <Slot $l={7}><Ico w={9} h={2}><path d="M0 1H9" stroke={INK} strokeWidth={1.500} /></Ico></Slot>
      <ZoomTrack><ZoomThumb /></ZoomTrack>
      <Slot $l={6}><Ico w={9} h={10}><path d="M0 5H9M4.500 .5V9.500" stroke={INK} strokeWidth={1.300} /></Ico></Slot>
      <Slot $w={31} $l={17} $mt={1}><Text $s={12.100}>100%</Text></Slot>
      <Slot $w={11} />
    </StatusBar>
  );
}

/* ---------- taskbar ---------- */

const TaskBar = styled.footer`
  flex: none;
  height: 59px;
  display: flex;
  align-items: center;
  background: linear-gradient(90deg, #e1edf7 0, #e4eef8 330px, #d5e4fb 430px, #d7dff6 570px, #d8dcf0 680px, #d2e3fa 770px, #d8dff6 900px, #d6def8 1000px, #d9dcf1 1080px, #d6dff8 1230px, #d8daed 1390px, #dde8f4 1500px, #e1edf7 1700px, #dcebf7 1920px);
`;

const Stack = styled.div<{ $right?: boolean }>`
  flex: none;
  display: flex;
  flex-direction: column;
  align-items: ${(p) => (p.$right ? "flex-end" : "flex-start")};
`;

const TaskSearch = styled.div`
  flex: none;
  width: 273px;
  height: 39px;
  margin-left: 18px;
  padding: 0 6px 0 13px;
  display: flex;
  align-items: center;
  background: #f2f6fd;
  border: 1px solid #c3cde4;
  border-radius: 20px;
`;

const App55 = styled.div`
  flex: none;
  width: 55px;
  height: 59px;
  display: grid;
  grid-template: 1fr / 1fr;
  place-items: center;

  & > * { grid-area: 1 / 1; }
`;

const AppPlate = styled.div<{ $c: string }>`
  width: 49px;
  height: 49px;
  border-radius: 5px;
  background: ${(p) => p.$c};
`;

const Indicator = styled.i<{ $c: string; $w: number }>`
  align-self: end;
  margin-bottom: 6px;
  width: ${(p) => p.$w}px;
  height: 4px;
  border-radius: 2px;
  background: ${(p) => p.$c};
`;

const Badge = styled.div`
  flex: none;
  width: 20px;
  height: 20px;
  margin-left: 9px;
  border-radius: 50%;
  background: #0067c0;
  display: flex;
  align-items: center;
  justify-content: center;
`;

const WeatherIcon = () => (
  <Ico w={28} h={29}>
    <defs>
      <linearGradient id="sun" x1="0" y1="0" x2="1" y2="1"><stop offset="0" stopColor="#f8c22e" /><stop offset="1" stopColor="#ea5f12" /></linearGradient>
      <linearGradient id="cloud" x1="0" y1="0" x2="0" y2="1"><stop offset="0" stopColor="#a9c6f3" /><stop offset=".6" stopColor="#cfe0fa" /><stop offset="1" stopColor="#7fa6e6" /></linearGradient>
    </defs>
    <circle cx={13} cy={12} r={12} fill="url(#sun)" />
    <path d="M7 28.500A5 5 0 0 1 7.500 18.500 7.300 7.300 0 0 1 21.500 18 5.200 5.200 0 0 1 22.500 28.500z" fill="url(#cloud)" />
  </Ico>
);
const WindowsIcon = () => (
  <Ico w={29} h={29}>
    <defs><linearGradient id="win" gradientUnits="userSpaceOnUse" x1="0" y1="0" x2="24" y2="29"><stop offset="0" stopColor="#4fd1ff" /><stop offset="1" stopColor="#0a6fd2" /></linearGradient></defs>
    <path d="M1 0H14V14H0V1zM15 0H28Q29 0 29 1V14H15zM0 15H14V29H1Q0 29 0 28zM15 15H29V28Q29 29 28 29H15z" fill="url(#win)" />
  </Ico>
);
const BingIcon = () => (
  <Ico w={26} h={26}>
    <defs><linearGradient id="bing" x1="0" y1="0" x2="0" y2="1"><stop offset="0" stopColor="#1fb0e8" /><stop offset="1" stopColor="#2350cf" /></linearGradient></defs>
    <path d="M1 13A12 12 0 1 1 13 25H1z" fill="#f2f8ff" stroke="url(#bing)" strokeWidth={1.700} />
    <path d="M8 4.500 12 6V16L15.500 14.300 13 12.800 12.300 9.500 17.500 12Q20.500 14.500 18 17.800L11.500 21.500 8 19z" fill="url(#bing)" />
  </Ico>
);
const TaskViewIcon = () => (
  <Ico w={30} h={29}>
    <rect y={8.500} width={23} height={20} rx={1} fill="#2b2b2b" />
    <rect x={7.500} y={.5} width={22} height={20} rx={1} fill="#f3f3f3" />
    <rect x={7.500} y={8.500} width={15.500} height={12} fill="#bcbcbe" />
  </Ico>
);
const ChatIcon = () => (
  <Ico w={29} h={29}>
    <defs><linearGradient id="chat" x1="0" y1="0" x2=".6" y2="1"><stop offset="0" stopColor="#9d76b8" /><stop offset="1" stopColor="#4f52c6" /></linearGradient></defs>
    <path d="M0 28.500 1.500 20A14 14 0 1 1 9 27Q6 28.500 0 28.500z" fill="url(#chat)" />
    <rect x={6.500} y={8.500} width={11.500} height={11.500} rx={1.500} fill="#fff" />
    <path d="M19 12.500 23 9V19.500L19 16z" fill="#fff" />
  </Ico>
);
const EdgeIcon = () => (
  <Ico w={30} h={30}>
    <defs>
      <linearGradient id="e1" x1="0" y1=".2" x2="1" y2=".4"><stop offset="0" stopColor="#1f9fe0" /><stop offset=".55" stopColor="#32c3d8" /><stop offset="1" stopColor="#62da50" /></linearGradient>
      <linearGradient id="e2" x1="0" y1="0" x2="1" y2="1"><stop offset="0" stopColor="#1c8ddb" /><stop offset="1" stopColor="#0c4f9e" /></linearGradient>
    </defs>
    <path d="M0 14A15 15 0 0 1 30 13Q30 20 22.500 20 17.500 20 18.500 17 18 10.500 11 9 4 8.500 0 14z" fill="url(#e1)" />
    <path d="M0 14Q4 7.500 11.500 8.500 17 9.500 18.500 14 12.500 12 11.500 18 12 25 20 25.500 24.500 25.500 27.500 23.500 23 30 15 30 1 29 0 14z" fill="url(#e2)" />
    <path d="M10 12.500Q8.500 24 15 28 22 30.500 27.500 23.500 21 27 16 23.500 10.500 19 12.500 13.500z" fill="#0d4a91" />
  </Ico>
);
const FolderIcon = () => (
  <Ico w={30} h={28}>
    <path d="M0 2Q0 1 1 1H10L13 4.500H29Q30 4.500 30 5.500V10H0z" fill="#e19f07" />
    <path d="M0 6.500H11L13.500 4.500H29Q30 4.500 30 5.500V27Q30 27.500 29 27.500H1Q0 27.500 0 26.500z" fill="#fdcd46" />
    <path d="M5.500 27.500V22.500Q5.500 20 8 20H22.500Q25 20 25 22.500V27.500z" fill="#1272c3" />
    <path d="M8.500 23.500H22" stroke="#0b4a86" strokeWidth={1.300} />
  </Ico>
);
const StoreIcon = () => (
  <Ico w={29} h={30}>
    <defs><linearGradient id="store" x1="0" y1="0" x2=".4" y2="1"><stop offset="0" stopColor="#0c67b7" /><stop offset="1" stopColor="#223c63" /></linearGradient></defs>
    <path d="M8 6V2Q8 1 9 1H20Q21 1 21 2V6" stroke="#22b5f3" strokeWidth={2} />
    <path d="M0 5H29V25Q29 30 24 30H5Q0 30 0 25z" fill="url(#store)" />
    <path d="M9 11.500H14V16.500H9z" fill="#f1511b" /><path d="M15 11.500H20V16.500H15z" fill="#80cc28" />
    <path d="M9 17.500H14V22.500H9z" fill="#00adef" /><path d="M15 17.500H20V22.500H15z" fill="#fbbc09" />
  </Ico>
);
const MailIcon = () => (
  <Ico w={30} h={28}>
    <path d="M0 9.500 15 0 30 9.500 15 20z" fill="#0b5cad" />
    <path d="M3 9H27L15 19z" fill="#f4f4f4" />
    <path d="M0 9.500 15 18.500 30 9.500V27Q30 28 29 28H1Q0 28 0 27z" fill="#2aaeea" />
    <path d="M15 18.500 30 9.500V28L15 18.500z" fill="#55c8f4" /><path d="M15 18.500 30 28H1z" fill="#1890dc" opacity=".6" />
  </Ico>
);
const TeamsIcon = () => (
  <Ico w={35} h={29}>
    <circle cx={15.500} cy={6} r={4.800} fill="#7b83eb" />
    <path d="M21 11.500H28Q30 11.500 30 13.500V19Q30 24 25.500 24 22 24 21 20z" fill="#5059c9" />
    <path d="M9 11.500H23V20Q22.500 27.500 16 27.500 9.500 27 9 20z" fill="#7b83eb" />
    <rect y={7} width={15.500} height={15.500} rx={1.500} fill="#464eb8" />
    <path d="M4 11H11.500M7.750 11V19.500" stroke="#fff" strokeWidth={2} />
    <circle cx={28.500} cy={5} r={6.500} fill="#fff" stroke="#8a9a7a" strokeWidth={.8} />
    <circle cx={28.500} cy={5} r={5.300} fill="#6bb700" />
    <path d="M25.800 5 27.800 7 31.300 3.300" stroke="#fff" strokeWidth={1.600} />
  </Ico>
);
const ExcelIcon = () => (
  <Ico w={29} h={28}>
    <rect x={7} width={11} height={7} fill="#21a366" /><rect x={18} width={11} height={7} fill="#33c481" />
    <rect x={7} y={7} width={11} height={7} fill="#107c41" /><rect x={18} y={7} width={11} height={7} fill="#21a366" />
    <rect x={7} y={14} width={11} height={7} fill="#185c37" /><rect x={18} y={14} width={11} height={7} fill="#107c41" />
    <rect x={7} y={21} width={22} height={7} fill="#185c37" />
    <rect y={6} width={15.500} height={16} rx={1.200} fill="#107c41" />
    <path d="M4.500 10 11 18.500M11 10 4.500 18.500" stroke="#fff" strokeWidth={2} />
  </Ico>
);
const ChromeIcon = () => (
  <Ico w={36} h={36}>
    <g transform="translate(0 3)">
      <circle cx={15} cy={18} r={15} fill="#2d9c46" />
      <path d="M2 10.500A15 15 0 0 1 28.500 11.500H15L9 21z" fill="#e33b2e" />
      <path d="M28.500 11.500A15 15 0 0 1 14 33L21 21.500 21 11.500z" fill="#fcc934" />
      <circle cx={15} cy={18} r={7} fill="#fff" />
      <circle cx={15} cy={18} r={5.700} fill="#3077e6" />
    </g>
    <path d="M31 -5Q33.500 -4 33.500 0V37Q33.500 41 31 43" stroke="#ccd3e8" strokeWidth={1} />
    <circle cx={26} cy={9} r={10} fill="#17120f" />
    <ellipse cx={26} cy={7.500} rx={2.200} ry={3} fill="#5b3a2a" />
    <path d="M22.500 16Q23 11.500 26 11.500T29.500 16z" fill="#332018" />
  </Ico>
);

function Task() {
  return (
    <TaskBar>
      <Slot $l={27} $mt={-2}><WeatherIcon /></Slot>
      <Slot $l={9} $mt={-2}>
        <Stack>
          <Text $s={13.900} $c="#1b1b1b">78°F</Text>
          <Text $s={14.400} $c="#5c6066">Partly cloudy</Text>
        </Stack>
      </Slot>
      <Slot $l={407}><WindowsIcon /></Slot>
      <TaskSearch>
        <Ico w={19} h={19}><circle cx={8.200} cy={8.200} r={7} stroke="#222" strokeWidth={2} /><path d="M13 13 18 18" stroke="#222" strokeWidth={2.400} /></Ico>
        <Text $s={16} $l={12} $c="#5c6066">Search</Text>
        <Push />
        <BingIcon />
      </TaskSearch>
      <Slot $l={3} $w={55}><TaskViewIcon /></Slot>
      <App55><ChatIcon /></App55>
      <App55><EdgeIcon /></App55>
      <App55><FolderIcon /><Indicator $c="#83868f" $w={8} /></App55>
      <App55><StoreIcon /></App55>
      <App55><MailIcon /></App55>
      <App55><Slot $l={4}><TeamsIcon /></Slot><Indicator $c="#83868f" $w={8} /></App55>
      <App55><AppPlate $c="#ecf1fb" /><ExcelIcon /><Indicator $c="#0078d7" $w={20} /></App55>
      <App55><AppPlate $c="#fde6e6" /><Slot $l={6} $mt={-6}><ChromeIcon /></Slot><Indicator $c="#c8281e" $w={8} /></App55>
      <Push />
      <Ico w={13} h={8}><path d="M1 7.300 6.500 1.500 12 7.300" stroke="#222" strokeWidth={1.700} /></Ico>
      <Slot $l={24} $mt={-2}>
        <Ico w={20} h={14}>
          <path d="M4.500 13.200A4 4 0 0 1 4 5.500 6 6 0 0 1 14.500 4 5 5 0 0 1 15.500 13.200z" fill="#c9c9c9" stroke="#333" strokeWidth={1.400} />
          <path d="M4.500 12.500Q1.500 11 2 8.500 6 4.500 10.500 7.500L15 12.500z" fill="#8b8b8b" />
        </Ico>
      </Slot>
      <Slot $l={21} $mt={-2}>
        <Ico w={18} h={14}>
          <path d="M1 5.500Q9 -2.500 17 5.500" stroke="#b0b5bd" strokeWidth={1.500} />
          <path d="M3.500 8Q9 2.700 14.500 8M6 10.500Q9 7.800 12 10.500" stroke="#222" strokeWidth={1.500} />
          <circle cx={9} cy={12.700} r={1.400} fill="#222" />
        </Ico>
      </Slot>
      <Slot $l={11} $mt={-1}>
        <Ico w={21} h={17}>
          <path d="M.8 5.500H4L8.500 1.500V15.500L4 11.500H.8z" stroke="#222" strokeWidth={1.400} />
          <path d="M11.500 5.500Q13.500 8.500 11.500 11.500M14 3.300Q17.500 8.500 14 13.700M16.800 1.200Q21.800 8.500 16.800 15.800" stroke="#222" strokeWidth={1.300} />
        </Ico>
      </Slot>
      <Slot $l={9} $mt={-1}>
        <Ico w={20} h={12}>
          <rect x={.8} y={.8} width={16.400} height={10.400} rx={2.500} stroke="#222" strokeWidth={1.500} />
          <rect x={3} y={3} width={5} height={6} fill="#222" />
          <path d="M19 4V8" stroke="#222" strokeWidth={1.800} />
        </Ico>
      </Slot>
      <Slot $l={21} $mt={-3} $w={61}>
        <Stack $right>
          <Text $s={14.600} $c="#1b1b1b">7:06 AM</Text>
          <Text $s={14.600} $c="#1b1b1b">8/6/2023</Text>
        </Stack>
      </Slot>
      <Badge><Text $s={12} $c="#fff">4</Text></Badge>
      <Slot $w={25} />
    </TaskBar>
  );
}

export default function App() {
  return (
    <Screen>
      <Global />
      <Title />
      <Tabs />
      <Ribbon />
      <Formula />
      <Worksheet />
      <Sheets />
      <Status />
      <Task />
    </Screen>
  );
}
